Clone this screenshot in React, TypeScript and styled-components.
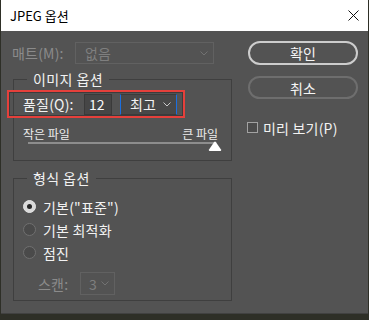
import React from "react";
import styled, { createGlobalStyle } from "styled-components";

const Global = createGlobalStyle`
  html, body { margin: 0; padding: 0; }
  body {
    background: #2e2f27;
    font-family: "Noto Sans CJK KR", "Noto Sans", sans-serif;
    width: 369px;
    height: 320px;
    overflow: hidden;
  }
`;

const Window = styled.div`
  margin-left: 1px;
  width: 367px;
  height: 314px;
  box-sizing: border-box;
  background: #535353;
  display: flex;
  flex-direction: column;
  border-bottom: 1px solid #414141;
`;

const TitleBar = styled.div`
  height: 31px;
  flex: none;
  background: #ffffff;
  display: flex;
  align-items: center;
  justify-content: space-between;
  padding: 0 9px;
  box-sizing: border-box;
  font-size: 13px;
  color: #000;
`;

const Body = styled.div`
  display: flex;
  padding-left: 11px;
  flex: 1;
`;

const LeftCol = styled.div`
  width: 221px;
  display: flex;
  flex-direction: column;
`;

const RightCol = styled.div`
  margin-left: 15px;
  width: 110px;
  display: flex;
  flex-direction: column;
  padding-top: 10px;
`;

const Row = styled.div<{ $mt?: number; $h?: number; $pl?: number }>`
  display: flex;
  align-items: center;
  margin-top: ${(p) => p.$mt ?? 0}px;
  height: ${(p) => p.$h ?? 22}px;
  padding-left: ${(p) => p.$pl ?? 0}px;
  font-size: 14px;
`;

const Label = styled.span<{ $w?: number; $disabled?: boolean }>`
  display: inline-block;
  width: ${(p) => (p.$w ? `${p.$w}px` : "auto")};
  color: ${(p) => (p.$disabled ? "#8b8b8b" : "#f2f2f2")};
  font-size: 14px;
  letter-spacing: 0.2px;
  white-space: nowrap;
`;

const Select = styled.div<{ $w: number; $h: number; $disabled?: boolean; $active?: boolean; $pl?: number }>`
  width: ${(p) => p.$w}px;
  height: ${(p) => p.$h}px;
  box-sizing: border-box;
  display: flex;
  align-items: center;
  justify-content: space-between;
  padding: 0 5px 0 ${(p) => p.$pl ?? 9}px;
  font-size: 14px;
  color: ${(p) => (p.$disabled ? "#7f7f7f" : "#f2f2f2")};
  background: ${(p) => (p.$active ? "#484848" : "#535353")};
  border: 1px solid ${(p) => (p.$active ? "#3b3b3b" : "#616161")};
  ${(p) => (p.$active ? "border-left-color: #1b6fe0; border-right-color: #1b6fe0;" : "")}
`;

const Group = styled.fieldset<{ $mt: number; $pb: number }>`
  margin: ${(p) => p.$mt}px 0 0 1px;
  width: 219px;
  box-sizing: border-box;
  border: 1px solid #3f3f3f;
  padding: 0 0 ${(p) => p.$pb}px 0;
  min-inline-size: 0;
`;

const Legend = styled.legend`
  margin-left: 13px;
  padding: 0 6px;
  font-size: 14px;
  letter-spacing: 0.4px;
  line-height: 18px;
  color: #f2f2f2;
`;

const Highlight = styled.div`
  margin: 2px 0 0 -7px;
  width: 178px;
  height: 28px;
  box-sizing: border-box;
  border: 2px solid #e5403b;
  box-shadow: inset 0 0 0 1px #3c3c3c;
  display: flex;
  align-items: center;
  padding-left: 14px;
`;

const NumInput = styled.div`
  width: 28px;
  height: 21px;
  box-sizing: border-box;
  background: #464646;
  border: 1px solid #3a3a3a;
  color: #fafafa;
  font-size: 14px;
  display: flex;
  align-items: center;
  padding-left: 4px;
  margin-right: 8px;
`;

const SizeLabels = styled.div`
  margin-top: 8px;
  height: 14px;
  display: flex;
  justify-content: space-between;
  align-items: center;
  padding: 0 13px 0 9px;
  font-size: 12px;
  color: #ececec;
`;

const Slider = styled.div`
  position: relative;
  margin: 1px 16px 0 14px;
  height: 10px;
`;

const Track = styled.div`
  margin-top: 2px;
  height: 2px;
  background: #8d8d8d;
`;

const Thumb = styled.svg`
  position: absolute;
  right: -7px;
  top: -1px;
`;

const Radio = styled.span<{ $checked?: boolean }>`
  width: 13px;
  height: 13px;
  box-sizing: border-box;
  border-radius: 50%;
  display: inline-flex;
  align-items: center;
  justify-content: center;
  margin-right: 7px;
  background: ${(p) => (p.$checked ? "#dadada" : "#4a4a4a")};
  border: 1px solid ${(p) => (p.$checked ? "#e4e4e4" : "#707070")};
  &::after {
    content: "";
    width: 5px;
    height: 5px;
    border-radius: 50%;
    background: ${(p) => (p.$checked ? "#262626" : "transparent")};
  }
`;

const PillButton = styled.button<{ $primary?: boolean; $h: number; $mt: number }>`
  width: 110px;
  height: ${(p) => p.$h}px;
  margin-top: ${(p) => p.$mt}px;
  box-sizing: border-box;
  border-radius: 12px;
  border: 2px solid ${(p) => (p.$primary ? "#cdcdcd" : "#6e6e6e")};
  background: #535353;
  color: #f6f6f6;
  font-family: inherit;
  font-size: 14px;
  padding: 0;
  display: flex;
  align-items: center;
  justify-content: center;
`;

const CheckRow = styled.div`
  margin-top: 23px;
  display: flex;
  align-items: center;
  height: 11px;
  margin-left: -1px;
`;

const CheckBox = styled.span`
  width: 11px;
  height: 11px;
  box-sizing: border-box;
  border: 1px solid #a2a2a2;
  background: #4b4b4b;
  margin-right: 5px;
`;

const Chevron = ({ color }: { color: string }) => (
  <svg width="8" height="5" viewBox="0 0 8 5">
    <path d="M0.5 0.5 L4 4 L7.5 0.5" fill="none" stroke={color} strokeWidth="1" />
  </svg>
);

export default function App() {
  return (
    <>
      <Global />
      <Window>
        <TitleBar>
          <span>JPEG 옵션</span>
          <svg width="11" height="11" viewBox="0 0 11 11">
            <path d="M0.5 0.5 L10.5 10.5 M10.5 0.5 L0.5 10.5" stroke="#111" strokeWidth="1" />
          </svg>
        </TitleBar>
        <Body>
          <LeftCol>
            <Row $mt={11} $h={22}>
              <Label $w={63} $disabled>매트(M):</Label>
              <Select $w={139} $h={22} $disabled>
                <span>없음</span>
                <Chevron color="#727272" />
              </Select>
            </Row>
            <Group $mt={6} $pb={8}>
              <Legend>이미지 옵션</Legend>
              <Highlight>
                <Label $w={61}>품질(Q):</Label>
                <NumInput>12</NumInput>
                <Select $w={57} $h={21} $active>
                  <span>최고</span>
                  <Chevron color="#c8c8c8" />
                </Select>
              </Highlight>
              <SizeLabels>
                <span>작은 파일</span>
                <span>큰 파일</span>
              </SizeLabels>
              <Slider>
                <Track />
                <Thumb width="14" height="11" viewBox="0 0 14 11">
                  <path
                    d="M6 1.2 Q7 0 8 1.2 L13 8.5 Q13.8 10 12 10 L2 10 Q0.2 10 1 8.5 Z"
                    fill="#ffffff"
                  />
                </Thumb>
              </Slider>
            </Group>
            <Group $mt={8} $pb={5}>
              <Legend>형식 옵션</Legend>
              <Row $mt={8} $h={23} $pl={9}>
                <Radio $checked />
                <Label>기본("표준")</Label>
              </Row>
              <Row $h={23} $pl={9}>
                <Radio />
                <Label>기본 최적화</Label>
              </Row>
              <Row $h={23} $pl={9}>
                <Radio />
                <Label>점진</Label>
              </Row>
              <Row $mt={8} $h={23} $pl={24}>
                <Label $w={42} $disabled>스캔:</Label>
                <Select $w={35} $h={23} $disabled $pl={8}>
                  <span>3</span>
                  <Chevron color="#727272" />
                </Select>
              </Row>
            </Group>
          </LeftCol>
          <RightCol>
            <PillButton $primary $h={24} $mt={0}>확인</PillButton>
            <PillButton $h={23} $mt={11}>취소</PillButton>
            <CheckRow>
              <CheckBox />
              <Label>미리 보기(P)</Label>
            </CheckRow>
          </RightCol>
        </Body>
      </Window>
    </>
  );
}
